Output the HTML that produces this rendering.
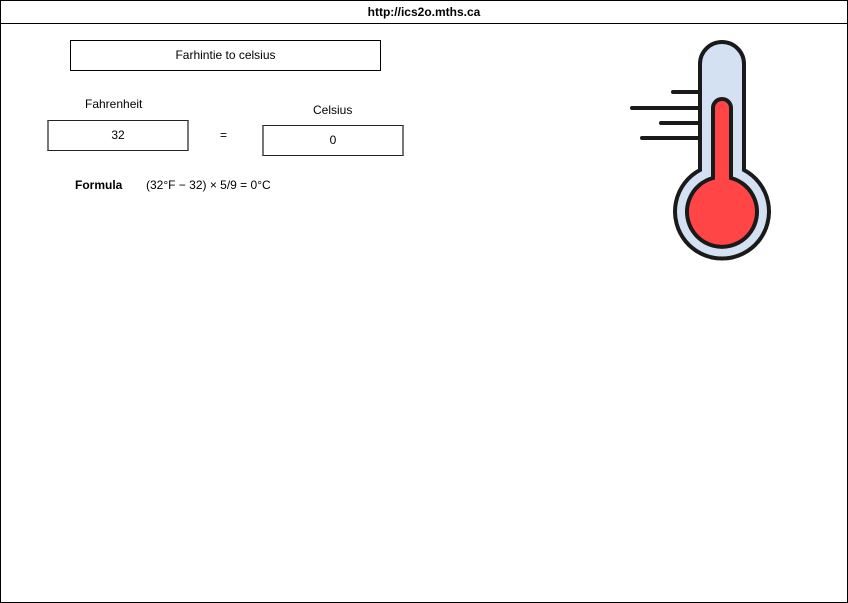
<!DOCTYPE html>
<html><head><style>
body{margin:0;width:848px;height:603px;background:#fff;font-family:"Liberation Sans",sans-serif;font-size:12px;color:#000;position:relative;overflow:hidden}
.frame{position:absolute;left:0;top:0;width:846px;height:601px;border:1px solid #000}
.bar{position:absolute;left:0;top:0;width:848px;height:23px;border-bottom:1px solid #000;text-align:center;line-height:24px;font-weight:bold}
.abs{position:absolute}
.box{position:absolute;border:1px solid #000;text-align:center;box-sizing:border-box}
.inp{position:absolute;border:1px solid #222;border-left:2px solid #777;border-right:2px solid #777;text-align:center;box-sizing:border-box}
</style></head><body>
<div class="frame"></div>
<div class="bar">http://ics2o.mths.ca</div>
<div class="box" style="left:70px;top:40px;width:311px;height:31px;line-height:29px">Farhintie to celsius</div>
<div class="abs" style="left:85px;top:97px">Fahrenheit</div>
<div class="abs" style="left:313px;top:103px">Celsius</div>
<div class="inp" style="left:47px;top:120px;width:142px;height:31px;line-height:28px">32</div>
<div class="abs" style="left:220px;top:128px">=</div>
<div class="inp" style="left:262px;top:125px;width:142px;height:31px;line-height:29px">0</div>
<div class="abs" style="left:75px;top:178px;font-weight:bold">Formula</div>
<div class="abs" style="left:146px;top:178px">(32°F − 32) × 5/9 = 0°C</div>
<svg class="abs" style="left:0;top:0" width="848" height="603">
<g stroke="#1a1a1a" stroke-width="4" stroke-linecap="round">
<line x1="673" y1="92" x2="698" y2="92"/>
<line x1="632" y1="108" x2="698" y2="108"/>
<line x1="661" y1="123" x2="698" y2="123"/>
<line x1="642" y1="138" x2="698" y2="138"/>
</g>
<path d="M700,64 A22,22 0 0 1 744,64 V170 A47,47 0 1 1 700,170 Z" fill="#d3e1f3" stroke="#1a1a1a" stroke-width="4"/>
<path d="M713,108 A9,9 0 0 1 731,108 V178 A35,35 0 1 1 713,178 Z" fill="#ff4545" stroke="#1a1a1a" stroke-width="4"/>
</svg>
</body></html>
